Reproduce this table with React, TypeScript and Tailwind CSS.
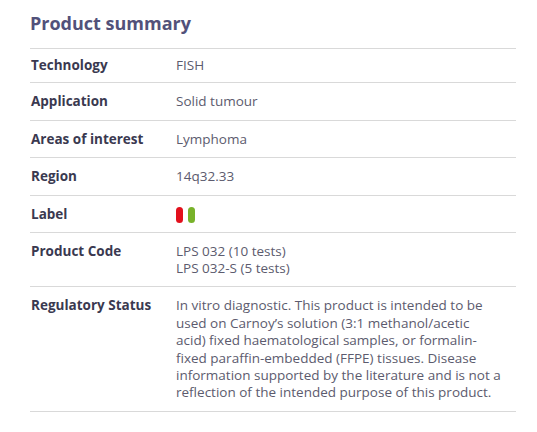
const regulatory = [
  "In vitro diagnostic. This product is intended to be",
  "used on Carnoy\u2019s solution (3:1 methanol/acetic",
  "acid) fixed haematological samples, or formalin-",
  "fixed paraffin-embedded (FFPE) tissues. Disease",
  "information supported by the literature and is not a",
  "reflection of the intended purpose of this product.",
]

const rows: { label: string; value: React.ReactNode; first?: boolean }[] = [
  { label: "Technology", value: "FISH", first: true },
  { label: "Application", value: "Solid tumour" },
  { label: "Areas of interest", value: "Lymphoma" },
  { label: "Region", value: "14q32.33" },
  {
    label: "Label",
    value: (
      <span className="flex gap-[5px] pt-[1px]">
        <span className="block h-[16px] w-[7px] rounded-full bg-[#e2101c]" />
        <span className="block h-[16px] w-[7px] rounded-full bg-[#78b22a]" />
      </span>
    ),
  },
  {
    label: "Product Code",
    value: (
      <>
        LPS 032 (10 tests)
        <br />
        LPS 032-S (5 tests)
      </>
    ),
  },
  {
    label: "Regulatory Status",
    value: regulatory.map((line) => (
      <span key={line} className="block whitespace-nowrap">
        {line}
      </span>
    )),
  },
]

export default function App() {
  return (
    <div className="min-h-screen bg-white px-[30px] pt-[11px] font-['Open_Sans',sans-serif]">
      <div className="w-[486px]">
        <h2 className="mb-[13px] text-[18px] font-bold leading-[24px] text-[#52517a]">Product summary</h2>
        <div className="border-t border-[#d9d9d9]">
          {rows.map((row) => (
            <div
              key={row.label}
              className={
                row.first
                  ? "flex border-b border-[#d9d9d9] pt-[8px] pb-[8px]"
                  : "flex border-b border-[#d9d9d9] pt-[10px] pb-[9px]"
              }
            >
              <div className="w-[146px] shrink-0 pl-[1px] text-[13.5px] font-bold leading-[17px] text-[#3a3950]">
                {row.label}
              </div>
              <div className="min-w-0 flex-1 pr-[4px] text-[13.5px] leading-[17.4px] text-[#5c5b6e]">
                {row.value}
              </div>
            </div>
          ))}
        </div>
      </div>
    </div>
  )
}
